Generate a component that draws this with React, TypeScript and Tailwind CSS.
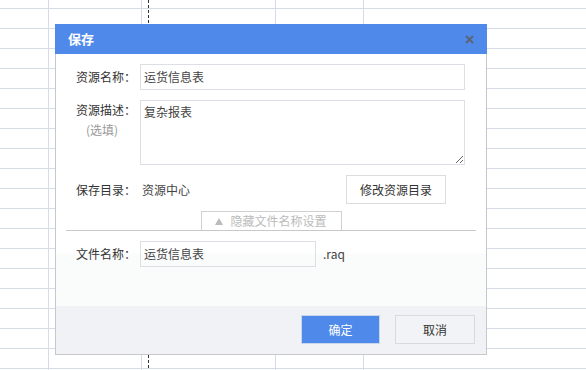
import React from "react";

const font = "font-['Noto_Sans_CJK_SC','Noto_Sans',sans-serif]";

function Label({ children }: { children: React.ReactNode }) {
  return <div className="w-[64px] shrink-0 text-[12px] leading-[20px] text-[#333]">{children}</div>;
}

export default function App() {
  return (
    <div
      className={`relative h-[370px] w-[586px] overflow-hidden bg-white bg-[image:repeating-linear-gradient(to_bottom,transparent_0_8px,#d5dce8_8px_9px,transparent_9px_20px)] ${font}`}
    >
      {/* spreadsheet columns */}
      <div className="flex h-full">
        <div className="w-[49px] shrink-0 border-r border-[#d5dce8]" />
        <div className="w-[93px] shrink-0 border-r border-[#d5dce8]" />
        <div className="w-[6px] shrink-0" />
        <div className="w-px shrink-0 bg-[image:repeating-linear-gradient(to_bottom,#333_0_3px,transparent_3px_5px)]" />
        <div className="w-[127px] shrink-0 border-r border-[#d5dce8]" />
        <div className="w-[88px] shrink-0 border-r border-[#d5dce8]" />
        <div className="flex-1" />
      </div>

      {/* dialog */}
      <div className="absolute left-[55px] top-[24px] flex w-[432px] flex-col">
        <div className="flex h-[30px] items-center justify-between bg-[#4f8aeb] pl-[13px] pr-[13px]">
          <span className="text-[13px] font-bold text-white">保存</span>
          <svg width="9" height="9" viewBox="0 0 9 9">
            <path d="M1 1L8 8M8 1L1 8" stroke="#5a6474" strokeWidth="2" />
          </svg>
        </div>
        <div className="flex flex-col border-x border-b border-[#c8c8c8] bg-white">
          <div className="flex flex-col pl-[20px] pr-[21px] pt-[10px]">
            <div className="flex items-center">
              <Label>资源名称：</Label>
              <div className="flex h-[26px] flex-1 items-center border border-[#dcdfe6] px-[3px] text-[12px] text-[#444]">
                运货信息表
              </div>
            </div>
            <div className="mt-[10px] flex items-start">
              <div className="flex w-[64px] shrink-0 flex-col text-[12px] leading-[20px]">
                <span className="text-[#333]">资源描述：</span>
                <span className="pl-[10px] text-[#999]">(选填)</span>
              </div>
              <textarea
                defaultValue="复杂报表"
                className={`h-[65px] flex-1 border border-[#dcdfe6] px-[3px] py-[3px] text-[12px] leading-[16px] text-[#444] outline-none ${font}`}
              />
            </div>
            <div className="mt-[10px] flex items-center">
              <Label>保存目录：</Label>
              <span className="flex-1 pl-[2px] text-[12px] text-[#444]">资源中心</span>
              <div className="mr-[19px] flex h-[29px] w-[100px] items-center justify-center border border-[#dcdcdc] text-[12px] text-[#333]">
                修改资源目录
              </div>
            </div>
          </div>
          <div className="mt-[7px] flex justify-center">
            <div className="flex h-[19px] w-[141px] items-center justify-center gap-[7px] border border-b-0 border-[#d0d0d0] text-[12px] text-[#bbbbbb]">
              <svg width="8" height="7" viewBox="0 0 8 7">
                <path d="M4 0L8 7H0Z" fill="#bbbbbb" />
              </svg>
              <span>隐藏文件名称设置</span>
            </div>
          </div>
          <div className="mx-[10px] h-px bg-[#c8c8c8]" />
          <div className="flex items-center bg-[image:linear-gradient(to_bottom,#fff_0_22px,#fafbfb_23px)] pb-[39px] pl-[20px] pt-[10px]">
            <Label>文件名称：</Label>
            <div className="flex h-[26px] w-[176px] items-center border border-[#dcdfe6] px-[3px] text-[12px] text-[#444]">
              运货信息表
            </div>
            <span className="ml-[7px] text-[12px] text-[#444]">.raq</span>
          </div>
          <div className="flex h-[48px] items-start justify-end gap-[15px] bg-[#f1f2f5] pr-[11px] pt-[9px]">
            <div className="flex h-[29px] w-[79px] items-center justify-center border border-[#c9d6ec] bg-[#4f8aeb] text-[12px] text-white">
              确定
            </div>
            <div className="flex h-[29px] w-[80px] items-center justify-center border border-[#dadada] bg-[#f2f3f6] text-[12px] text-[#333]">
              取消
            </div>
          </div>
        </div>
      </div>
    </div>
  );
}
